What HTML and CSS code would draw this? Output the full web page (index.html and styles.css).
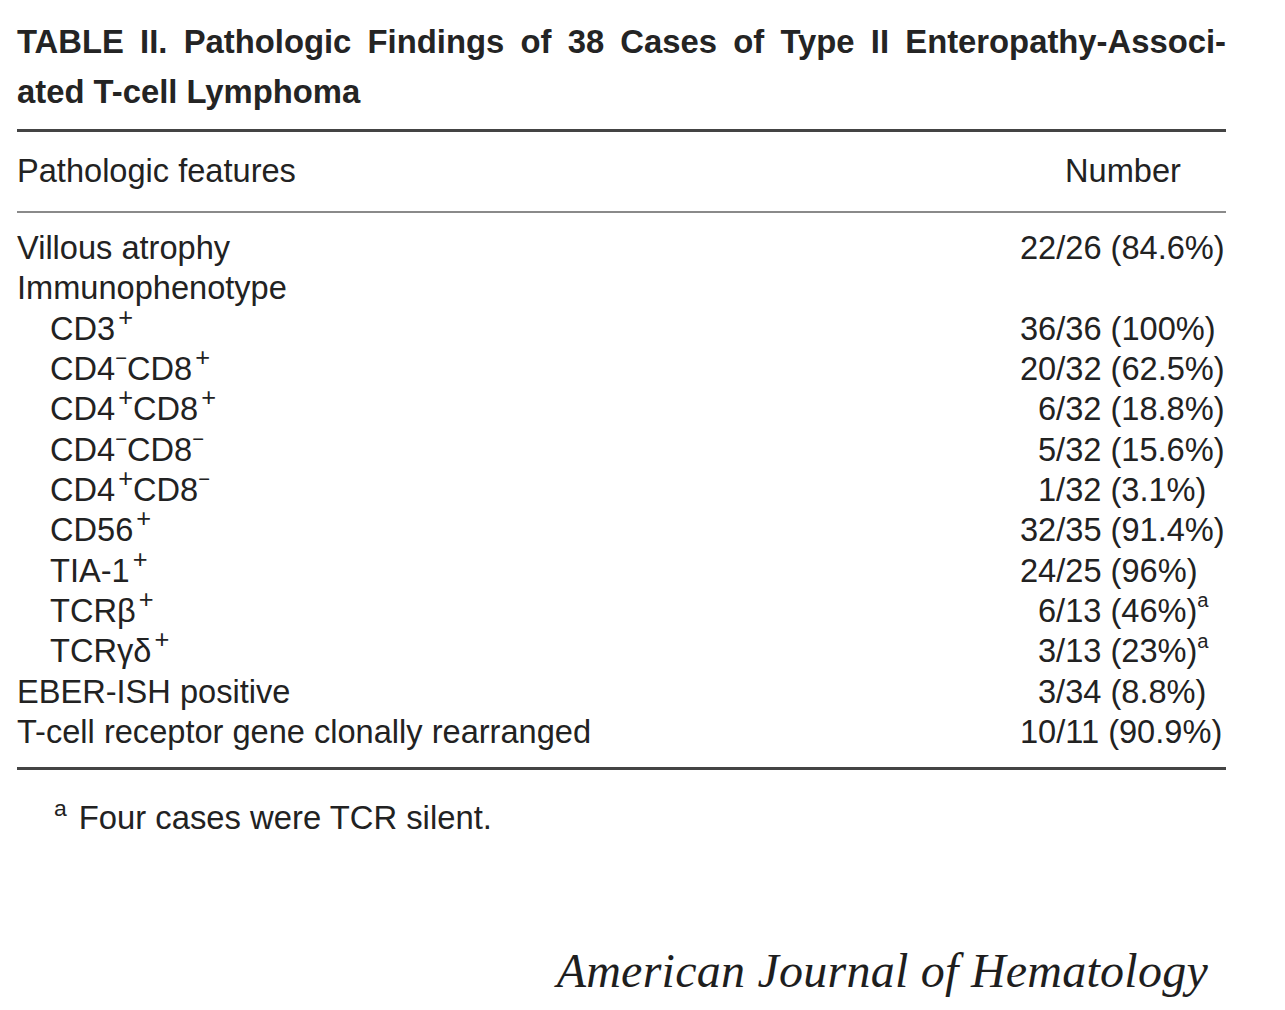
FILE: index.html
```html
<!DOCTYPE html>
<html>
<head>
<meta charset="utf-8">
<link rel="stylesheet" href="styles.css">
</head>
<body>
<div class="page">
  <div class="title">
    <span class="title-line1">TABLE II. Pathologic Findings of 38 Cases of Type II Enteropathy-Associ-</span>
    <span class="title-line2">ated T-cell Lymphoma</span>
  </div>
  <div class="table">
    <div class="head">
      <div class="col-feature">Pathologic features</div>
      <div class="col-number head-number">Number</div>
    </div>
    <div class="body">
      <div class="row"><div class="col-feature">Villous atrophy</div><div class="col-number">22/26 (84.6%)</div></div>
      <div class="row"><div class="col-feature">Immunophenotype</div><div class="col-number"></div></div>
      <div class="row"><div class="col-feature sub">CD3<sup class="sg">+</sup></div><div class="col-number">36/36 (100%)</div></div>
      <div class="row"><div class="col-feature sub">CD4<sup class="sm">−</sup>CD8<sup class="sg">+</sup></div><div class="col-number">20/32 (62.5%)</div></div>
      <div class="row"><div class="col-feature sub">CD4<sup class="sg">+</sup>CD8<sup class="sg">+</sup></div><div class="col-number pad">6/32 (18.8%)</div></div>
      <div class="row"><div class="col-feature sub">CD4<sup class="sm">−</sup>CD8<sup class="sm">−</sup></div><div class="col-number pad">5/32 (15.6%)</div></div>
      <div class="row"><div class="col-feature sub">CD4<sup class="sg">+</sup>CD8<sup class="sm">−</sup></div><div class="col-number pad">1/32 (3.1%)</div></div>
      <div class="row"><div class="col-feature sub">CD56<sup class="sg">+</sup></div><div class="col-number">32/35 (91.4%)</div></div>
      <div class="row"><div class="col-feature sub">TIA-1<sup class="sg">+</sup></div><div class="col-number">24/25 (96%)</div></div>
      <div class="row"><div class="col-feature sub">TCRβ<sup class="sg">+</sup></div><div class="col-number pad">6/13 (46%)<sup class="fa">a</sup></div></div>
      <div class="row"><div class="col-feature sub">TCRγδ<sup class="sg">+</sup></div><div class="col-number pad">3/13 (23%)<sup class="fa">a</sup></div></div>
      <div class="row"><div class="col-feature">EBER-ISH positive</div><div class="col-number pad">3/34 (8.8%)</div></div>
      <div class="row"><div class="col-feature">T-cell receptor gene clonally rearranged</div><div class="col-number">10/11 (90.9%)</div></div>
    </div>
  </div>
  <div class="footnote"><sup class="fn-mark">a</sup>Four cases were TCR silent.</div>
  <div class="journal">American Journal of Hematology</div>
</div>
</body>
</html>
```

FILE: styles.css
```css
html, body {
  margin: 0;
  padding: 0;
  background: #ffffff;
}

.page {
  width: 1209px;
  padding: 17px 0 0 17px;
  font-family: "Liberation Sans", Arial, Helvetica, sans-serif;
  color: #222222;
}

.title {
  font-weight: bold;
  font-size: 32.8px;
  line-height: 50px;
  color: #242424;
}

.title-line1 {
  display: block;
  text-align: justify;
  text-align-last: justify;
}

.title-line2 {
  display: block;
}

.table {
  margin-top: 12px;
  font-size: 32.6px;
}

.head {
  display: flex;
  border-top: 3px solid #444;
  border-bottom: 2px solid #8a8a8a;
  padding: 19px 0 20px;
  line-height: 40px;
}

.body {
  padding: 15px 0 15px;
  border-bottom: 3px solid #444;
}

.row {
  display: flex;
  line-height: 40.33px;
  height: 40.33px;
}

.col-feature {
  flex: 1;
  white-space: nowrap;
}

.col-feature.sub {
  padding-left: 33px;
}

.col-number {
  width: 206px;
  white-space: nowrap;
}

.head-number {
  text-align: center;
}

.col-number.pad {
  padding-left: 18px;
  width: 188px;
}

sup {
  line-height: 0;
  vertical-align: baseline;
  position: relative;
}

.sg {
  font-size: 0.78em;
  font-weight: 300;
  top: -0.55em;
  margin-left: 3px;
}

.sm {
  font-size: 0.62em;
  top: -0.72em;
  margin-left: 0;
}

.fa {
  font-size: 0.62em;
  top: -0.72em;
}

.footnote {
  font-size: 32.8px;
  line-height: 40px;
  margin-top: 28px;
  padding-left: 37px;
}

.fn-mark {
  font-size: 0.7em;
  top: -0.6em;
  margin-right: 12px;
}

.journal {
  font-family: "Liberation Serif", "Times New Roman", serif;
  font-style: italic;
  font-size: 48px;
  letter-spacing: 0.25px;
  color: #1e1e1e;
  text-align: right;
  padding-right: 18px;
  margin-top: 103px;
  line-height: 60px;
}
```
